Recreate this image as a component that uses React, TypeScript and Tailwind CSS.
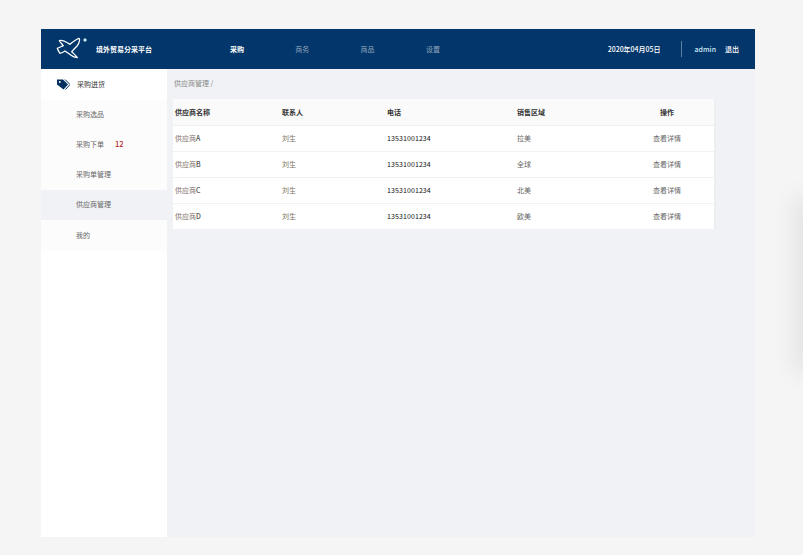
const font = { fontFamily: '"Noto Sans CJK SC", "Noto Sans", sans-serif' };

const suppliers = [
  { name: "供应商", tag: "A", region: "拉美" },
  { name: "供应商", tag: "B", region: "全球" },
  { name: "供应商", tag: "C", region: "北美" },
  { name: "供应商", tag: "D", region: "欧美" },
];

const nav = ["采购", "商务", "商品", "设置"];

// Plane logo
function Logo() {
  return (
    <svg width="34" height="26" viewBox="0 0 34 26" fill="none" className="shrink-0">
      <path
        d="M3.3 4.7 C6 3.5 10 6 14 8.3 C17 6 20 3 23 2.3 C24.2 3 23.5 6.5 21.3 9.7 C19.5 11.5 17.5 13.5 15.7 15.7 C17.5 17.5 20 19.5 21.3 21.7 C19 21.5 16.5 20.5 14.7 19 C12.5 17.5 10.5 16 9 15 C7.5 16 5.5 17 4 17.3 C3 16 1.8 14 1.3 12.3 C3 11.5 5.5 10.5 7.3 9.7 C6 8 4.2 6.3 3.3 4.7 Z"
        stroke="white"
        strokeWidth="1.3"
        strokeLinejoin="round"
      />
      <path d="M29 2 L31 4 L29 6 L27 4 Z" fill="#cfeaf8" />
    </svg>
  );
}

function TagIcon() {
  return (
    <svg width="13" height="11" viewBox="0 0 13 11" className="shrink-0">
      <path d="M0 0.5 H6 L11 5.5 L6.5 10.5 L0 5.5 Z" fill="#03305f" />
      <path d="M8 0.5 L13 5.5 L8.5 10.5" fill="none" stroke="#03305f" strokeWidth="1" />
      <circle cx="2.8" cy="3" r="0.9" fill="white" />
    </svg>
  );
}

function Header() {
  return (
    <header className="flex h-10 items-center bg-[#03366a] text-[7px] text-white">
      <div className="ml-[15px] flex w-[174px] items-center">
        <Logo />
        <span className="ml-[6px] font-bold">境外贸易分采平台</span>
      </div>
      <nav className="flex">
        {nav.map((item, i) => (
          <span key={item} className={"w-[65.3px] " + (i === 0 ? "font-bold text-white" : "text-[#93a6bd]")}>
            {item}
          </span>
        ))}
      </nav>
      <div className="ml-auto flex items-center pr-[16px]">
        <span className="font-medium">2020年04月05日</span>
        <span className="ml-[20px] mr-[13px] h-[16px] w-px bg-[#5f7f9f]" />
        <span className="font-medium text-[#cfeaf8]">admin</span>
        <span className="ml-[9px] font-medium">退出</span>
      </div>
    </header>
  );
}

function Sidebar() {
  return (
    <aside className="w-[126px] shrink-0 bg-white text-[7px] text-[#666]">
      <div className="flex h-[31px] items-center pl-[16px] text-[#333]">
        <TagIcon />
        <span className="ml-[7px]">采购进货</span>
      </div>
      <div className="flex h-[30px] items-center bg-[#fcfcfc] pb-[2px] pl-[35px]">采购选品</div>
      <div className="flex h-[30px] items-center bg-[#fcfcfc] pb-[2px] pl-[35px]">
        采购下单
        <span className="ml-[11px] text-[7.5px] font-medium text-[#b3262b]">12</span>
      </div>
      <div className="flex h-[30px] items-center bg-[#fcfcfc] pb-[2px] pl-[35px]">采购单管理</div>
      <div className="flex h-[30px] items-center bg-[#f0f2f5] pb-[2px] pl-[35px]">供应商管理</div>
      <div className="flex h-[31px] items-center bg-[#fcfcfc] pl-[35px]">我的</div>
    </aside>
  );
}

function Table() {
  const cols = "grid grid-cols-[107px_105px_130px_105px_94px] items-center";
  return (
    <div className="ml-[6px] mt-[11px] w-[543px] border-r-2 border-[#eceef2] text-[7px]">
      <div className={cols + " h-[27px] border-b border-[#f0f0f0] bg-[#fafafa] font-bold text-[#333]"}>
        <span className="pl-[2px]">供应商名称</span>
        <span className="pl-[2px]">联系人</span>
        <span className="pl-[2px]">电话</span>
        <span className="pl-[2px]">销售区域</span>
        <span className="text-center">操作</span>
      </div>
      {suppliers.map((s, i) => (
        <div
          key={s.tag}
          className={
            cols + " bg-white " + (i < suppliers.length - 1 ? "h-[26px] border-b border-[#f2f2f2]" : "h-[25px]")
          }
        >
          <span className="pl-[2px] text-[#80706a]">
            {s.name}
            <span className="text-[#222]">{s.tag}</span>
          </span>
          <span className="pl-[2px] text-[#7a7260]">刘生</span>
          <span className="pl-[2px] tracking-[0.1px] text-[#111]">13531001234</span>
          <span className="pl-[2px] text-[#666]">{s.region}</span>
          <span className="text-center text-[#666]">查看详情</span>
        </div>
      ))}
    </div>
  );
}

export default function App() {
  return (
    <div className="relative h-[555px] overflow-hidden bg-[#f5f5f5] pl-[41px] pt-[29px]" style={font}>
      <div className="flex h-[508px] w-[714px] flex-col">
        <Header />
        <div className="flex flex-1">
          <Sidebar />
          <main className="flex-1 bg-[#f0f2f5]">
            <div className="pl-[7px] pt-[9px] text-[7px] leading-[10px] text-[#888]">供应商管理 /</div>
            <Table />
          </main>
        </div>
      </div>
      {/* soft shadow at the right edge */}
      <div className="absolute right-[-14px] top-[205px] h-[160px] w-[14px] shadow-[0_0_24px_8px_rgba(0,0,0,0.08)]" />
    </div>
  );
}
